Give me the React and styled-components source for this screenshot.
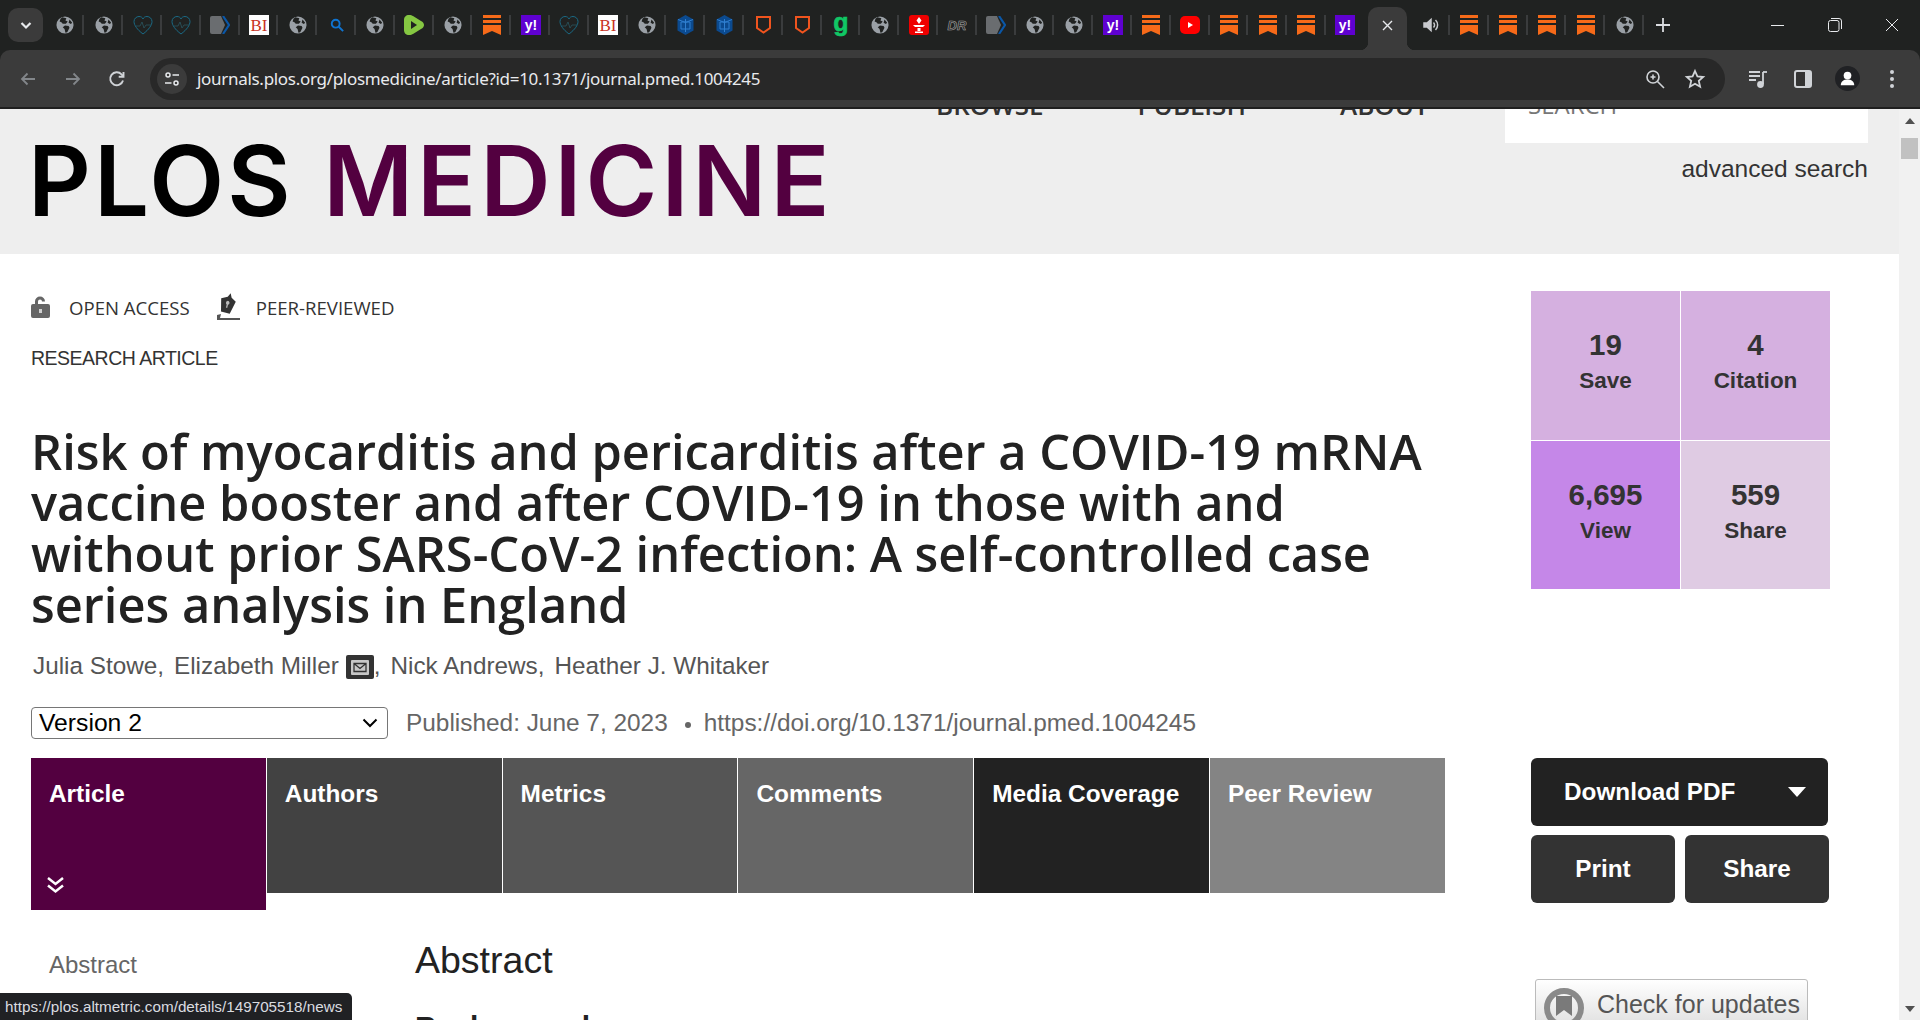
import React from 'react'
import styled, { createGlobalStyle } from 'styled-components'

const GlobalStyle = createGlobalStyle`
	html, body {
		margin: 0;
		padding: 0;
		height: 100%;
		overflow: hidden;
		background: #fff;
		font-family: 'Liberation Sans', Arial, sans-serif;
	}
	* { box-sizing: border-box; }
`

const Window = styled.div`
	position: relative;
	width: 1920px;
	height: 1020px;
	display: flex;
	flex-direction: column;
	overflow: hidden;
	background: #202221;
`

/* browser chrome */
const TabStrip = styled.div`
	height: 50px;
	flex: none;
	display: flex;
	align-items: flex-start;
`
const TabSearch = styled.div`
	width: 35px;
	height: 34px;
	margin: 8px 0 0 8px;
	border-radius: 10px;
	background: #3b3b3b;
	color: #e8eaed;
	display: flex;
	align-items: center;
	justify-content: center;
	flex: none;
`
const TabList = styled.div`
	display: flex;
	margin-left: 2.6px;
	height: 50px;
	flex: none;
`
const Tab = styled.div`
	position: relative;
	width: 38.8px;
	height: 50px;
	display: flex;
	align-items: center;
	justify-content: center;
	padding-bottom: 1px;
	&::after {
		content: '';
		display: ${(p) => (p.$bare ? 'none' : 'block')};
		position: absolute;
		right: 0;
		top: 15px;
		height: 20px;
		width: 2px;
		background: #3a3c3d;
	}
`
const ActiveTab = styled.div`
	position: relative;
	width: 39px;
	height: 43px;
	margin: 7px 4.6px 0 3px;
	background: #3b3b3b;
	border-radius: 10px 10px 0 0;
	color: #e8eaed;
	display: flex;
	align-items: center;
	justify-content: center;
	padding-bottom: 6px;
	flex: none;
	&::before, &::after {
		content: '';
		position: absolute;
		bottom: 0;
		width: 8px;
		height: 8px;
	}
	&::before {
		left: -8px;
		background: radial-gradient(circle at 0 0, transparent 8px, #3b3b3b 8.5px);
	}
	&::after {
		right: -8px;
		background: radial-gradient(circle at 100% 0, transparent 8px, #3b3b3b 8.5px);
	}
`
const NewTab = styled.div`
	width: 38px;
	height: 50px;
	color: #dadce0;
	display: flex;
	align-items: center;
	justify-content: center;
	flex: none;
`
const WindowButtons = styled.div`
	margin-left: auto;
	display: flex;
	color: #e8eaed;
	height: 50px;
	align-items: center;
`
const WindowButton = styled.div`
	width: 57px;
	display: flex;
	justify-content: center;
`
const Toolbar = styled.div`
	height: 59px;
	flex: none;
	background: #3b3b3b;
	border-radius: 10px 10px 0 0;
	border-bottom: 2px solid #1f1f1f;
	display: flex;
	align-items: center;
	padding: 0 0 0 6px;
`
const NavButton = styled.div`
	width: 44.5px;
	height: 36px;
	color: ${(p) => (p.$dim ? '#82868a' : '#d0d3d7')};
	display: flex;
	align-items: center;
	justify-content: center;
	flex: none;
`
const Omnibox = styled.div`
	width: 1575px;
	height: 42px;
	margin-left: 10.5px;
	border-radius: 21px;
	background: #282828;
	display: flex;
	align-items: center;
	padding: 0 19px 0 7px;
	flex: none;
`
const SiteChip = styled.div`
	width: 30px;
	height: 30px;
	border-radius: 50%;
	background: #3b3b3b;
	display: flex;
	align-items: center;
	justify-content: center;
	flex: none;
`
const Url = styled.div`
	margin-left: 10px;
	font-family: 'Noto Sans', 'Open Sans', sans-serif;
	font-size: 17px;
	letter-spacing: -0.3px;
	color: #e8eaed;
`
const OmniIcons = styled.div`
	margin-left: auto;
	display: flex;
	gap: 19px;
	color: #d0d3d7;
	align-items: center;
`
const ToolIcons = styled.div`
	display: flex;
	color: #d0d3d7;
	margin-left: 11px;
	align-items: center;
`
const ToolIcon = styled.div`
	width: 44.5px;
	display: flex;
	justify-content: center;
`

/* page */
const Viewport = styled.div`
	flex: 1;
	display: flex;
	min-height: 0;
`
const Page = styled.div`
	width: 1899px;
	flex: none;
	background: #fff;
	overflow: hidden;
`
const Scrollbar = styled.div`
	width: 21px;
	flex: none;
	background: #f1f1f1;
	display: flex;
	flex-direction: column;
	align-items: center;
`
const ScrollUp = styled.div`
	width: 0;
	height: 0;
	margin-top: 9px;
	border-left: 5px solid transparent;
	border-right: 5px solid transparent;
	border-bottom: 6px solid #505050;
`
const ScrollThumb = styled.div`
	width: 17px;
	height: 21px;
	margin-top: 14px;
	background: #c1c1c1;
`
const ScrollDown = styled.div`
	width: 0;
	height: 0;
	margin-top: auto;
	margin-bottom: 8px;
	border-left: 5px solid transparent;
	border-right: 5px solid transparent;
	border-top: 6px solid #505050;
`
const Header = styled.header`
	height: 145px;
	background: #eee;
	position: relative;
	overflow: hidden;
	display: flex;
	padding-left: 28px;
`
const Logo = styled.div`
	margin-top: 24px;
	font-family: 'Inter', sans-serif;
	font-size: 97.5px;
	line-height: 96px;
	font-weight: 600;
	letter-spacing: 3px;
	color: #000;
	white-space: nowrap;
	span {
		color: #530040;
		letter-spacing: 4px;
		margin-left: 2px;
	}
`
const HeaderNav = styled.nav`
	position: absolute;
	top: -17px;
	left: 936px;
	display: flex;
	gap: 94px;
	font-family: 'Open Sans', sans-serif;
	font-weight: 600;
	font-size: 26px;
	line-height: 26px;
	color: #333;
`
const HeaderSearch = styled.div`
	margin-left: auto;
	margin-right: 31px;
	width: 363px;
	display: flex;
	flex-direction: column;
	align-items: flex-end;
`
const SearchBox = styled.div`
	width: 363px;
	height: 34px;
	background: #fff;
	padding-left: 23px;
	font-family: 'Open Sans', sans-serif;
	font-size: 24px;
	line-height: 24px;
	color: #777;
	overflow: hidden;
	& > span { display: block; margin-top: -16px; }
`
const Advanced = styled.div`
	margin-top: 12px;
	font-size: 24.5px;
	line-height: 28px;
	color: #333;
`
const Body = styled.div`
	display: flex;
`
const LeftColumn = styled.div`
	width: 1531px;
	flex: none;
	padding: 38px 0 0 31px;
`
const RightColumn = styled.aside`
	width: 300px;
	flex: none;
	padding-top: 37px;
`
const Badges = styled.div`
	display: flex;
	align-items: center;
	height: 30px;
	font-family: 'Open Sans', sans-serif;
	font-size: 18.6px;
	color: #333;
`
const Badge = styled.div`
	display: flex;
	align-items: center;
	margin-right: ${(p) => p.$gap || 0}px;
	svg { margin-right: ${(p) => p.$iconGap}px; }
`
const ArticleType = styled.div`
	margin-top: 24px;
	font-size: 19.5px;
	letter-spacing: -0.5px;
	line-height: 24px;
	color: #333;
`
const Title = styled.h1`
	margin: 56px 0 0;
	width: 1420px;
	font-family: 'Open Sans', sans-serif;
	font-weight: 600;
	font-size: 48.75px;
	line-height: 51px;
	color: #222;
`
const Authors = styled.div`
	margin: 20px 0 0 2px;
	display: flex;
	align-items: center;
	height: 32px;
	font-size: 24.3px;
	color: #555;
`
const Author = styled.span`
	margin-right: ${(p) => p.$gap}px;
`
const MailIcon = styled.span`
	width: 28px;
	height: 24px;
	margin: 2px 0 0 7px;
	background: #333;
	border-radius: 2px;
	display: flex;
	align-items: center;
	justify-content: center;
`
const Meta = styled.div`
	margin-top: 25px;
	display: flex;
	align-items: center;
	font-size: 24.4px;
	color: #666;
`
const VersionSelect = styled.div`
	width: 357px;
	height: 32px;
	margin-right: 18px;
	padding: 0 9px 0 7px;
	border: 1px solid #767676;
	border-radius: 4px;
	background: #fff;
	color: #000;
	font-size: 24.7px;
	display: flex;
	align-items: center;
	justify-content: space-between;
`
const MetaDot = styled.span`
	width: 6px;
	height: 6px;
	border-radius: 50%;
	background: #666;
	margin: 3px 13px 0 17px;
`
const ArticleTabs = styled.div`
	margin-top: 19px;
	width: 1414px;
	display: flex;
	gap: 1px;
	align-items: flex-start;
`
const ArticleTab = styled.div`
	position: relative;
	width: 234.8px;
	height: ${(p) => (p.$active ? 152 : 135)}px;
	background: ${(p) => p.$bg};
	color: #fff;
	font-weight: 700;
	font-size: 24.4px;
	line-height: 28px;
	padding: 22px 18px;
	flex: none;
`
const TabChevron = styled.div`
	position: absolute;
	left: 15px;
	bottom: 16px;
	line-height: 0;
`
const ContentRow = styled.div`
	display: flex;
`
const SideNav = styled.div`
	width: 384px;
	flex: none;
	padding: 40px 0 0 18px;
	font-size: 24px;
	line-height: 30px;
	color: #666;
`
const Abstract = styled.div`
	padding-top: 28px;
`
const AbstractHeading = styled.h2`
	margin: 0;
	font-weight: 400;
	font-size: 37.5px;
	line-height: 44px;
	color: #222;
`
const SubHeading = styled.h3`
	margin: 27px 0 0;
	font-weight: 700;
	font-size: 30px;
	line-height: 36px;
	color: #222;
`
const MetricsGrid = styled.div`
	width: 299px;
	display: grid;
	grid-template-columns: 149px 149px;
	grid-template-rows: 149px 148px;
	gap: 1px;
`
const MetricCell = styled.div`
	background: ${(p) => p.$bg};
	color: #333;
	font-weight: 700;
	display: flex;
	flex-direction: column;
	align-items: center;
	padding-top: 38px;
`
const MetricValue = styled.div`
	font-size: 29.5px;
	line-height: 32px;
`
const MetricLabel = styled.div`
	margin-top: 5px;
	font-size: 22.5px;
	line-height: 30px;
`
const Actions = styled.div`
	margin-top: 169px;
	width: 298px;
	display: flex;
	flex-wrap: wrap;
	gap: 9px 10px;
`
const ActionButton = styled.div`
	height: 68px;
	width: ${(p) => (p.$wide ? '297px' : '144px')};
	background: ${(p) => (p.$wide ? '#222' : '#333')};
	border-radius: 6px;
	color: #fff;
	font-weight: 700;
	font-size: 24.3px;
	display: flex;
	align-items: center;
	justify-content: ${(p) => (p.$wide ? 'flex-start' : 'center')};
	padding: ${(p) => (p.$wide ? '0 22px 0 33px' : '0')};
`
const Caret = styled.span`
	margin-left: auto;
	width: 0;
	height: 0;
	border-left: 9.5px solid transparent;
	border-right: 9.5px solid transparent;
	border-top: 10px solid #fff;
`
const UpdatesBadge = styled.div`
	margin: 76px 0 0 4px;
	width: 273px;
	height: 60px;
	border: 1px solid #bbb;
	border-radius: 3px;
	background: linear-gradient(#fff, #d8d8d8);
	display: flex;
	align-items: flex-start;
	padding: 8px 0 0 8px;
	color: #555;
	font-size: 25px;
	line-height: 32px;
	svg { margin-right: 13px; flex: none; }
`
const StatusBubble = styled.div`
	position: absolute;
	left: 0;
	bottom: 0;
	width: 352px;
	height: 27px;
	background: #202124;
	border-top-right-radius: 5px;
	color: #dadce0;
	font-size: 15.25px;
	line-height: 28px;
	padding-left: 5px;
	white-space: nowrap;
`

/* tab favicons */
const Globe = () => (
	<svg width='18' height='18' viewBox='0 0 20 20'>
		<circle cx='10' cy='10' r='9.5' fill='#9aa0a6' />
		<path d='M7 1.5l4.500 1-1 2.500 2.500 1-2 2.500H7.500L6 7l-2-1 1-3zM10 10.500l4 .5 1 2-2.500 5-2 .5-1-4-2-2zM15 4l3 3.500-1.500 1.500-2.500-1.500z' fill='#202221' />
	</svg>
)
const Heart = () => (
	<svg width='20' height='20' viewBox='0 0 20 20' fill='none' stroke='#1a6a85' strokeWidth='1'>
		<path d='M10 19C4 14.500 1 10 1 6.500 1 3.500 3.500 1.500 6 1.500 8 1.500 9.500 2.500 10 4 10.500 2.500 12 1.500 14 1.500 16.500 1.500 19 3.500 19 6.500 19 10 16 14.500 10 19z' />
		<path d='M3 11h4l2-4 2 6 2-3h5' stroke='#2a5560' strokeWidth='.8' />
	</svg>
)
const Tag = () => (
	<svg width='20' height='18' viewBox='0 0 20 18'>
		<path d='M0 2a2 2 0 012-2h9l4 9-4 9H2a2 2 0 01-2-2z' fill='#6a6d70' />
		<path d='M13 0l6 9-6 9' fill='none' stroke='#0a57a8' strokeWidth='2.2' />
	</svg>
)
const BI = () => (
	<svg width='20' height='20' viewBox='0 0 20 20'>
		<rect width='20' height='20' fill='#fff' />
		<text x='10' y='15.5' textAnchor='middle' fontFamily='Liberation Serif, serif' fontSize='17' fill='#c8321e'>BI</text>
	</svg>
)
const Lens = () => (
	<svg width='14' height='14' viewBox='0 0 16 16' fill='none' stroke='#0f74d1' strokeWidth='2.2'>
		<circle cx='6.5' cy='6.5' r='4.5' />
		<path d='M10 10l5 5' />
	</svg>
)
const Rumble = () => (
	<svg width='20' height='20' viewBox='0 0 20 20'>
		<path d='M5 0C2 0 0 2 0 5v10c0 3 2 5 5 5 2 0 3-.5 4-1l8-5c4-2 4-6 0-8L9 1C8 .5 7 0 5 0z' fill='#85c742' />
		<path d='M7 6l6 4-6 4z' fill='#202221' />
	</svg>
)
const Bookmark = () => (
	<svg width='18' height='20' viewBox='0 0 18 20' fill='#f66a19'>
		<rect width='18' height='3' />
		<rect y='5' width='18' height='3' />
		<path d='M0 10h18v10l-9-4-9 4z' />
	</svg>
)
const Yahoo = () => (
	<svg width='20' height='20' viewBox='0 0 20 20'>
		<rect width='20' height='20' fill='#5f01d1' />
		<text x='10' y='15' textAnchor='middle' fontFamily='Liberation Sans, sans-serif' fontWeight='700' fontSize='14' fill='#fff'>y!</text>
	</svg>
)
const Hex = () => (
	<svg width='17' height='20' viewBox='0 0 17 20'>
		<path d='M8.500 0l8 4.500v11l-8 4.500-8-4.500v-11z' fill='#0b4a8f' />
		<path d='M4 7h9v7H4zM8.500 4v13M1 4.500l7.500 3 7.500-3' fill='none' stroke='#2f7fd0' strokeWidth='1' />
	</svg>
)
const Shield = () => (
	<svg width='15' height='18' viewBox='0 0 15 18' fill='none' stroke='#f0541e' strokeWidth='2'>
		<path d='M1 1h13v11l-6.500 4.500L1 12z' />
	</svg>
)
const GreenG = () => (
	<svg width='16' height='24' viewBox='0 0 16 24'>
		<text x='8' y='17.5' textAnchor='middle' fontFamily='Liberation Sans, sans-serif' fontWeight='700' fontSize='25' stroke='#10c765' strokeWidth='.6' fill='#10c765'>g</text>
	</svg>
)
const Torch = () => (
	<svg width='20' height='20' viewBox='0 0 20 20'>
		<rect width='20' height='20' rx='3' fill='#ee0000' />
		<path d='M10 2l2.500 3.500L10 9 7.500 5.500zM4 10h12l-2 2H6zM8.500 13h3v3h-3zM6 16.500h8V18H6z' fill='#fff' />
	</svg>
)
const DR = () => (
	<svg width='20' height='20' viewBox='0 0 20 20'>
		<text x='10' y='15' textAnchor='middle' fontFamily='Liberation Sans, sans-serif' fontWeight='700' fontStyle='italic' fontSize='13' fill='#202221' stroke='#a8a8a8' strokeWidth='.6'>DR</text>
	</svg>
)
const Youtube = () => (
	<svg width='20' height='20' viewBox='0 0 20 20'>
		<rect y='1' width='20' height='18' rx='5' fill='#f00' />
		<path d='M8 7l5 3-5 3z' fill='#fff' />
	</svg>
)
const Speaker = () => (
	<svg width='18' height='18' viewBox='0 0 18 18' fill='none' stroke='#c8cace' strokeWidth='1.5'>
		<path d='M2 7v4h3l4 3.500v-11L5 7z' fill='#c8cace' />
		<path d='M11.500 6.500a3.500 3.500 0 010 5M13.500 4a7 7 0 010 10' />
	</svg>
)

const icons = { g: Globe, h: Heart, t: Tag, b: BI, l: Lens, r: Rumble, m: Bookmark, y: Yahoo, x: Hex, s: Shield, e: GreenG, o: Torch, d: DR, u: Youtube, p: Speaker }
const leftTabs = 'gghhtbglgrgmyhbgxxssegodtggymummmy'.split('')
const rightTabs = 'pmmmmg'.split('')

const metrics = [
	{ value: '19', label: 'Save', bg: '#d5b0e0' },
	{ value: '4', label: 'Citation', bg: '#d5b0e0' },
	{ value: '6,695', label: 'View', bg: '#c587e8' },
	{ value: '559', label: 'Share', bg: '#dfcbe3' }
]
const tabs = [
	{ text: 'Article', bg: '#530040', active: true },
	{ text: 'Authors', bg: '#424242' },
	{ text: 'Metrics', bg: '#555555' },
	{ text: 'Comments', bg: '#666666' },
	{ text: 'Media Coverage', bg: '#222222' },
	{ text: 'Peer Review', bg: '#848484' }
]

function renderTab(key, i, bare) {
	const Icon = icons[key]
	return (
		<Tab key={i} $bare={bare}>
			<Icon />
		</Tab>
	)
}

export default function App() {
	return (
		<Window>
			<GlobalStyle />
			<TabStrip>
				<TabSearch>
					<svg width='14' height='14' viewBox='0 0 14 14' fill='none' stroke='currentColor' strokeWidth='2.2'>
						<path d='M2.500 5l4.500 4.500L11.500 5' />
					</svg>
				</TabSearch>
				<TabList>
					{leftTabs.map((k, i) => renderTab(k, i, i === leftTabs.length - 1))}
					<ActiveTab>
						<svg width='11' height='11' viewBox='0 0 11 11' stroke='currentColor' strokeWidth='1.4'>
							<path d='M1 1l9 9M10 1l-9 9' />
						</svg>
					</ActiveTab>
					{rightTabs.map((k, i) => renderTab(k, 'r' + i, false))}
					<NewTab>
						<svg width='14' height='14' viewBox='0 0 14 14' stroke='currentColor' strokeWidth='1.8'>
							<path d='M7 0v14M0 7h14' />
						</svg>
					</NewTab>
				</TabList>
				<WindowButtons>
					<WindowButton>
						<svg width='13' height='13' viewBox='0 0 13 13' stroke='currentColor'><path d='M0 6.500h13' /></svg>
					</WindowButton>
					<WindowButton>
						<svg width='14' height='14' viewBox='0 0 14 14' fill='none' stroke='currentColor'>
							<rect x='.5' y='2.500' width='10.500' height='11' rx='2' />
							<path d='M3 .5h8a2.500 2.500 0 012.500 2.500v8' />
						</svg>
					</WindowButton>
					<WindowButton>
						<svg width='14' height='14' viewBox='0 0 14 14' stroke='currentColor'><path d='M1 1l12 12M13 1L1 13' /></svg>
					</WindowButton>
				</WindowButtons>
			</TabStrip>
			<Toolbar>
				<NavButton $dim>
					<svg width='18' height='18' viewBox='0 0 18 18' fill='none' stroke='currentColor' strokeWidth='1.8'>
						<path d='M16 9H3M8.500 3.500L3 9l5.500 5.500' />
					</svg>
				</NavButton>
				<NavButton $dim>
					<svg width='18' height='18' viewBox='0 0 18 18' fill='none' stroke='currentColor' strokeWidth='1.8'>
						<path d='M2 9h13M9.500 3.500L15 9l-5.500 5.500' />
					</svg>
				</NavButton>
				<NavButton>
					<svg width='20' height='20' viewBox='0 0 20 20' fill='none' stroke='currentColor' strokeWidth='1.9'>
						<path d='M16 11.500A6.500 6.500 0 1114.500 5.300L16.500 7.500' />
						<path d='M16.500 3v4.800h-4.800' />
					</svg>
				</NavButton>
				<Omnibox>
					<SiteChip>
						<svg width='18' height='18' viewBox='0 0 18 18' fill='none' stroke='#e8eaed' strokeWidth='1.5'>
							<circle cx='5' cy='5' r='2' />
							<path d='M9.500 5H16M2 13h6.500' />
							<circle cx='13' cy='13' r='2' />
						</svg>
					</SiteChip>
					<Url>journals.plos.org/plosmedicine/article?id=10.1371/journal.pmed.1004245</Url>
					<OmniIcons>
						<svg width='20' height='20' viewBox='0 0 20 20' fill='none' stroke='currentColor' strokeWidth='1.6'>
							<circle cx='8' cy='8' r='6' />
							<path d='M12.500 12.500L19 19M5.500 8h5M8 5.500v5' />
						</svg>
						<svg width='22' height='22' viewBox='0 0 22 22' fill='none' stroke='currentColor' strokeWidth='1.8'>
							<path d='M11 3l2.400 5.400 5.800.6-4.400 3.900 1.300 5.800L11 15.700l-5.100 3 1.300-5.800L2.800 9l5.800-.6z' />
						</svg>
					</OmniIcons>
				</Omnibox>
				<ToolIcons>
					<ToolIcon>
						<svg width='20' height='20' viewBox='0 0 20 20' fill='none' stroke='currentColor' strokeWidth='1.8'>
							<path d='M1 3h11M1 7h11M1 11h7M15 3v12' />
							<circle cx='12.500' cy='15.500' r='2.500' fill='currentColor' />
							<path d='M15 3h4' />
						</svg>
					</ToolIcon>
					<ToolIcon>
						<svg width='18' height='18' viewBox='0 0 18 18'>
							<rect x='1' y='1' width='16' height='16' rx='2' fill='#333' stroke='currentColor' strokeWidth='2' />
							<rect x='11' y='1' width='6' height='16' fill='currentColor' />
						</svg>
					</ToolIcon>
					<ToolIcon>
						<svg width='25' height='25' viewBox='0 0 26 26'>
							<circle cx='13' cy='13' r='13' fill='#202124' />
							<circle cx='13' cy='10' r='4' fill='#fff' />
							<path d='M6 20c0-4 3-6 7-6s7 2 7 6z' fill='#fff' />
						</svg>
					</ToolIcon>
					<ToolIcon>
						<svg width='6' height='20' viewBox='0 0 6 20' fill='currentColor'>
							<circle cx='3' cy='3' r='2' />
							<circle cx='3' cy='10' r='2' />
							<circle cx='3' cy='17' r='2' />
						</svg>
					</ToolIcon>
				</ToolIcons>
			</Toolbar>
			<Viewport>
				<Page>
					<Header>
						<Logo>
							PLOS <span>MEDICINE</span>
						</Logo>
						<HeaderNav>
							<span>BROWSE</span>
							<span>PUBLISH</span>
							<span>ABOUT</span>
						</HeaderNav>
						<HeaderSearch>
							<SearchBox>
								<span>SEARCH</span>
							</SearchBox>
							<Advanced>advanced search</Advanced>
						</HeaderSearch>
					</Header>
					<Body>
						<LeftColumn>
							<Badges>
								<Badge $gap={27} $iconGap={19}>
									<svg width='19' height='22' viewBox='0 0 19 22' fill='#666'>
										<path d='M4 8V5.500a5 5 0 0110 0h-3a2 2 0 00-4 0V8h10a2 2 0 012 2v10a2 2 0 01-2 2H2a2 2 0 01-2-2V10a2 2 0 012-2z' />
										<rect x='8' y='13' width='3' height='4' fill='#fff' opacity='.7' />
									</svg>
									OPEN ACCESS
								</Badge>
								<Badge $iconGap={16}>
									<svg width='23' height='28' viewBox='0 0 23 28'>
										<g transform='rotate(14 11 11)'>
											<path d='M11 0l2 4 5 3-3 13H6L3 7l6-3z' fill='#333' />
											<path d='M10.500 8v7' stroke='#bbb' strokeWidth='1.3' />
											<circle cx='10.500' cy='10' r='1.800' fill='#bbb' />
										</g>
										<path d='M0 22l4-1-1 4h20v2H0z' fill='#555' />
									</svg>
									PEER-REVIEWED
								</Badge>
							</Badges>
							<ArticleType>RESEARCH ARTICLE</ArticleType>
							<Title>
								Risk of myocarditis and pericarditis after a COVID-19 mRNA vaccine booster and after COVID-19 in those with and without prior SARS-CoV-2 infection: A self-controlled case series analysis in England
							</Title>
							<Authors>
								<Author $gap={10}>Julia Stowe,</Author>
								<span>Elizabeth Miller</span>
								<MailIcon>
									<svg width='18' height='15' viewBox='0 0 18 15'>
										<rect width='18' height='15' rx='1' fill='#c8c8c8' />
										<path d='M3 3.500l6 5 6-5M3 3.500h12v8H3z' fill='none' stroke='#333' strokeWidth='1.3' />
									</svg>
								</MailIcon>
								<Author $gap={10}>,</Author>
								<Author $gap={10}>Nick Andrews,</Author>
								<span>Heather J. Whitaker</span>
							</Authors>
							<Meta>
								<VersionSelect>
									Version 2
									<svg width='16' height='10' viewBox='0 0 16 10' fill='none' stroke='#000' strokeWidth='2'>
										<path d='M1.500 1.500L8 8l6.500-6.500' />
									</svg>
								</VersionSelect>
								<span>Published: June 7, 2023</span>
								<MetaDot />
								<span>https://doi.org/10.1371/journal.pmed.1004245</span>
							</Meta>
							<ArticleTabs>
								{tabs.map((t) => (
									<ArticleTab key={t.text} $bg={t.bg} $active={t.active}>
										{t.text}
										{t.active && (
											<TabChevron>
												<svg width='19' height='17' viewBox='0 0 19 17' fill='none' stroke='#fff' strokeWidth='2.5'>
													<path d='M2 1l7.500 6L17 1M2 8.500l7.500 6 7.500-6' />
												</svg>
											</TabChevron>
										)}
									</ArticleTab>
								))}
							</ArticleTabs>
							<ContentRow>
								<SideNav>Abstract</SideNav>
								<Abstract>
									<AbstractHeading>Abstract</AbstractHeading>
									<SubHeading>Background</SubHeading>
								</Abstract>
							</ContentRow>
						</LeftColumn>
						<RightColumn>
							<MetricsGrid>
								{metrics.map((m) => (
									<MetricCell key={m.label} $bg={m.bg}>
										<MetricValue>{m.value}</MetricValue>
										<MetricLabel>{m.label}</MetricLabel>
									</MetricCell>
								))}
							</MetricsGrid>
							<Actions>
								<ActionButton $wide>
									Download PDF
									<Caret />
								</ActionButton>
								<ActionButton>Print</ActionButton>
								<ActionButton>Share</ActionButton>
							</Actions>
							<UpdatesBadge>
								<svg width='40' height='40' viewBox='0 0 40 40'>
									<circle cx='20' cy='20' r='17' fill='none' stroke='#8a8a8a' strokeWidth='6' />
									<path d='M12 8h16v20l-8-6-8 6z' fill='#7a7a7a' />
								</svg>
								Check for updates
							</UpdatesBadge>
						</RightColumn>
					</Body>
				</Page>
				<Scrollbar>
					<ScrollUp />
					<ScrollThumb />
					<ScrollDown />
				</Scrollbar>
			</Viewport>
			<StatusBubble>https://plos.altmetric.com/details/149705518/news</StatusBubble>
		</Window>
	)
}
